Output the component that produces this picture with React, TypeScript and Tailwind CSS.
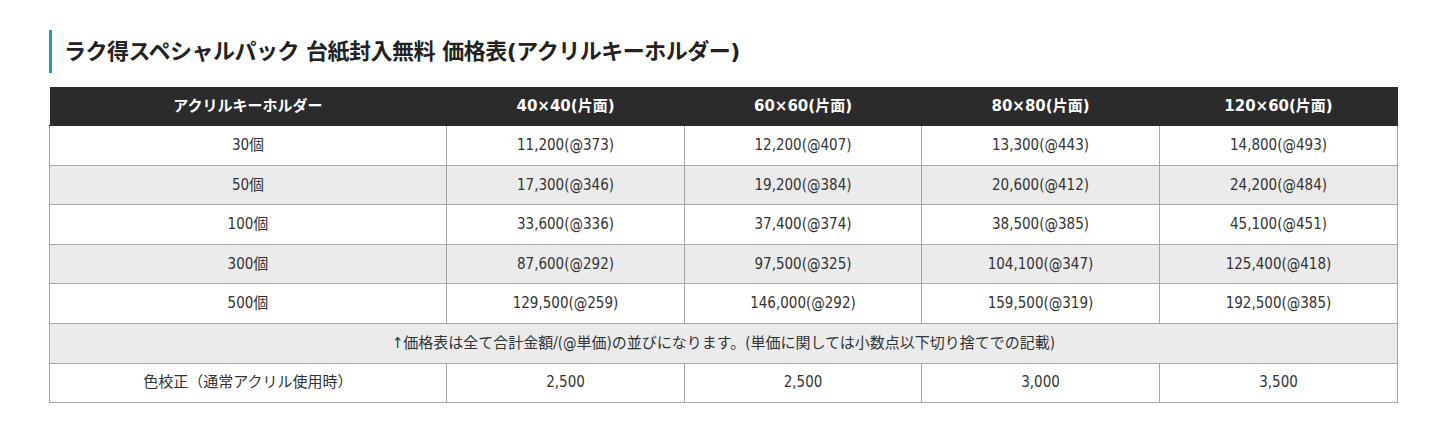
const columns = ['アクリルキーホルダー', '40×40(片面)', '60×60(片面)', '80×80(片面)', '120×60(片面)'];

const rows = [
  ['30個', '11,200(@373)', '12,200(@407)', '13,300(@443)', '14,800(@493)'],
  ['50個', '17,300(@346)', '19,200(@384)', '20,600(@412)', '24,200(@484)'],
  ['100個', '33,600(@336)', '37,400(@374)', '38,500(@385)', '45,100(@451)'],
  ['300個', '87,600(@292)', '97,500(@325)', '104,100(@347)', '125,400(@418)'],
  ['500個', '129,500(@259)', '146,000(@292)', '159,500(@319)', '192,500(@385)'],
];

const colorProof = ['色校正（通常アクリル使用時）', '2,500', '2,500', '3,000', '3,500'];

const wide = { fontFamily: '"DejaVu Sans", "Noto Sans CJK JP", sans-serif' };

export default function App() {
  return (
    <div
      className="min-h-[429px] bg-white px-[49px] pt-[30px] text-[15px] text-[#333]"
      style={{ fontFamily: '"DejaVu Sans Condensed", "Noto Sans CJK JP", sans-serif' }}
    >
      {/* Heading */}
      <h2
        className="flex h-[43px] items-center border-l-[3px] border-[#2a97b3] pl-[12px] text-[22px] font-bold leading-none tracking-[-0.5px] text-[#222]"
        style={wide}
      >
        ラク得スペシャルパック 台紙封入無料 価格表(アクリルキーホルダー)
      </h2>

      {/* Price table */}
      <table className="mt-[14px] w-[1348px] table-fixed border-collapse">
        <colgroup>
          <col className="w-[397px]" />
          <col className="w-[238px]" />
          <col className="w-[237px]" />
          <col className="w-[238px]" />
          <col className="w-[238px]" />
        </colgroup>
        <thead>
          <tr className="h-[38px] bg-[#2b2b2b] text-[15px] text-white" style={wide}>
            {columns.map((c) => (
              <th key={c} className="border-y border-[#2b2b2b] text-center font-bold">
                {c}
              </th>
            ))}
          </tr>
        </thead>
        <tbody>
          {rows.map((r, i) => (
            <tr key={r[0]} className={i % 2 === 0 ? 'h-[39.5px] bg-white' : 'h-[39.5px] bg-[#ebebeb]'}>
              {r.map((cell, j) => (
                <td key={j} className="border border-[#a6a6a6] text-center">
                  {cell}
                </td>
              ))}
            </tr>
          ))}
          <tr className="h-[40px] bg-[#ebebeb]">
            <td colSpan={5} className="border border-[#a6a6a6] text-center">
              ↑価格表は全て合計金額/(@単価)の並びになります。(単価に関しては小数点以下切り捨てでの記載)
            </td>
          </tr>
          <tr className="h-[39px] bg-white">
            {colorProof.map((cell, j) => (
              <td key={j} className="border border-[#a6a6a6] text-center">
                {cell}
              </td>
            ))}
          </tr>
        </tbody>
      </table>
    </div>
  );
}
